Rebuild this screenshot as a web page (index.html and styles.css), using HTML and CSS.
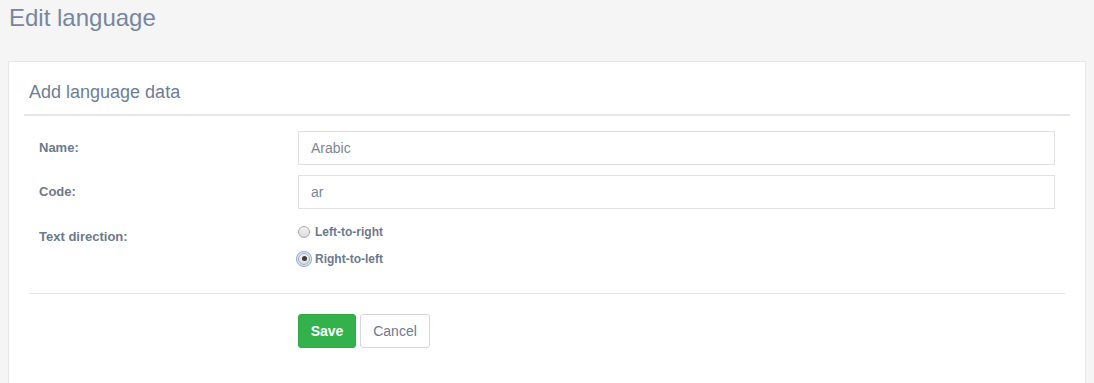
FILE: index.html
```html
<!DOCTYPE html>
<html>
<head>
<meta charset="utf-8">
<link rel="stylesheet" href="styles.css">
</head>
<body>
<div class="page">
  <h1 class="page-title">Edit language</h1>
  <div class="panel">
    <h2 class="panel-title">Add language data</h2>
    <div class="form">
      <div class="row">
        <label class="label">Name:</label>
        <div class="field"><div class="input">Arabic</div></div>
      </div>
      <div class="row">
        <label class="label">Code:</label>
        <div class="field"><div class="input">ar</div></div>
      </div>
      <div class="row row-radios">
        <label class="label label-radios">Text direction:</label>
        <div class="field radios">
          <div class="radio-line"><span class="radio"></span><span class="radio-text">Left-to-right</span></div>
          <div class="radio-line"><span class="radio checked"><span class="dot"></span></span><span class="radio-text">Right-to-left</span></div>
        </div>
      </div>
    </div>
    <div class="divider"></div>
    <div class="actions">
      <div class="spacer"></div>
      <div class="buttons">
        <button class="btn btn-save">Save</button>
        <button class="btn btn-cancel">Cancel</button>
      </div>
    </div>
  </div>
</div>
</body>
</html>
```
FILE: styles.css
```css
* { box-sizing: border-box; }
html, body { margin: 0; padding: 0; }
body {
  background: #f5f5f5;
  font-family: "Liberation Sans", Arial, sans-serif;
  width: 1094px;
  height: 383px;
  overflow: hidden;
}
.page { padding: 4px 8px 0 8px; }
.page-title {
  margin: 0;
  font-size: 24px;
  font-weight: normal;
  line-height: 27px;
  color: #7587a0;
  padding-left: 1px;
  height: 57px;
}
.panel {
  background: #fff;
  border: 1px solid #e4e6e9;
  padding: 17px 15px 40px 15px;
}
.panel-title {
  margin: 0;
  font-size: 18px;
  font-weight: normal;
  line-height: 20px;
  color: #6e7d93;
  padding: 3px 5px 12px 5px;
  border-bottom: 2px solid #e3e6ea;
}
.form { padding: 15px 15px 0 15px; display: flex; flex-direction: column; gap: 10px; }
.row { display: grid; grid-template-columns: 259px 1fr; align-items: center; }
.row-radios { align-items: start; }
.label {
  font-size: 13px;
  font-weight: bold;
  color: #6c7a8e;
  line-height: 18px;
}
.label-radios { padding-top: 9px; }
.input {
  height: 34px;
  border: 1px solid #dfe1e5;
  padding: 0 12px;
  font-size: 14px;
  line-height: 32px;
  color: #7a8799;
}
.radios { display: flex; flex-direction: column; margin-top: -1px; }
.radio-line { display: flex; align-items: center; height: 27px; }
.radio {
  width: 12px;
  height: 12px;
  border-radius: 50%;
  border: 1px solid #a9a9a9;
  background: linear-gradient(#f4f4f4, #dcdcdc);
  margin-right: 5px;
  margin-left: 0;
  position: relative;
  display: flex;
  align-items: center;
  justify-content: center;
}
.radio.checked {
  outline: 1px solid #86aee6;
  outline-offset: 1px;
  box-shadow: 0 0 0 2px #dbe7f8;
}
.radio .dot { width: 5px; height: 5px; border-radius: 50%; background: #3c3c3c; }
.radio-text { font-size: 12px; font-weight: bold; color: #6c7a8e; }
.divider { margin: 21px 5px 0 5px; border-top: 1px solid #e3e5e8; }
.actions { display: grid; grid-template-columns: 274px 1fr; padding-top: 20px; }
.buttons { display: flex; gap: 4px; }
.btn {
  height: 34px;
  padding: 0 12px;
  font-family: "Liberation Sans", Arial, sans-serif;
  font-size: 14px;
  border-radius: 3px;
  cursor: pointer;
}
.btn-save {
  width: 58px;
  padding: 0;
  background: #33b24c;
  border: 1px solid #2fa847;
  color: #fff;
  font-weight: bold;
}
.btn-cancel {
  width: 70px;
  padding: 0;
  background: #fff;
  border: 1px solid #d5d7db;
  color: #6c7a8e;
}
```
